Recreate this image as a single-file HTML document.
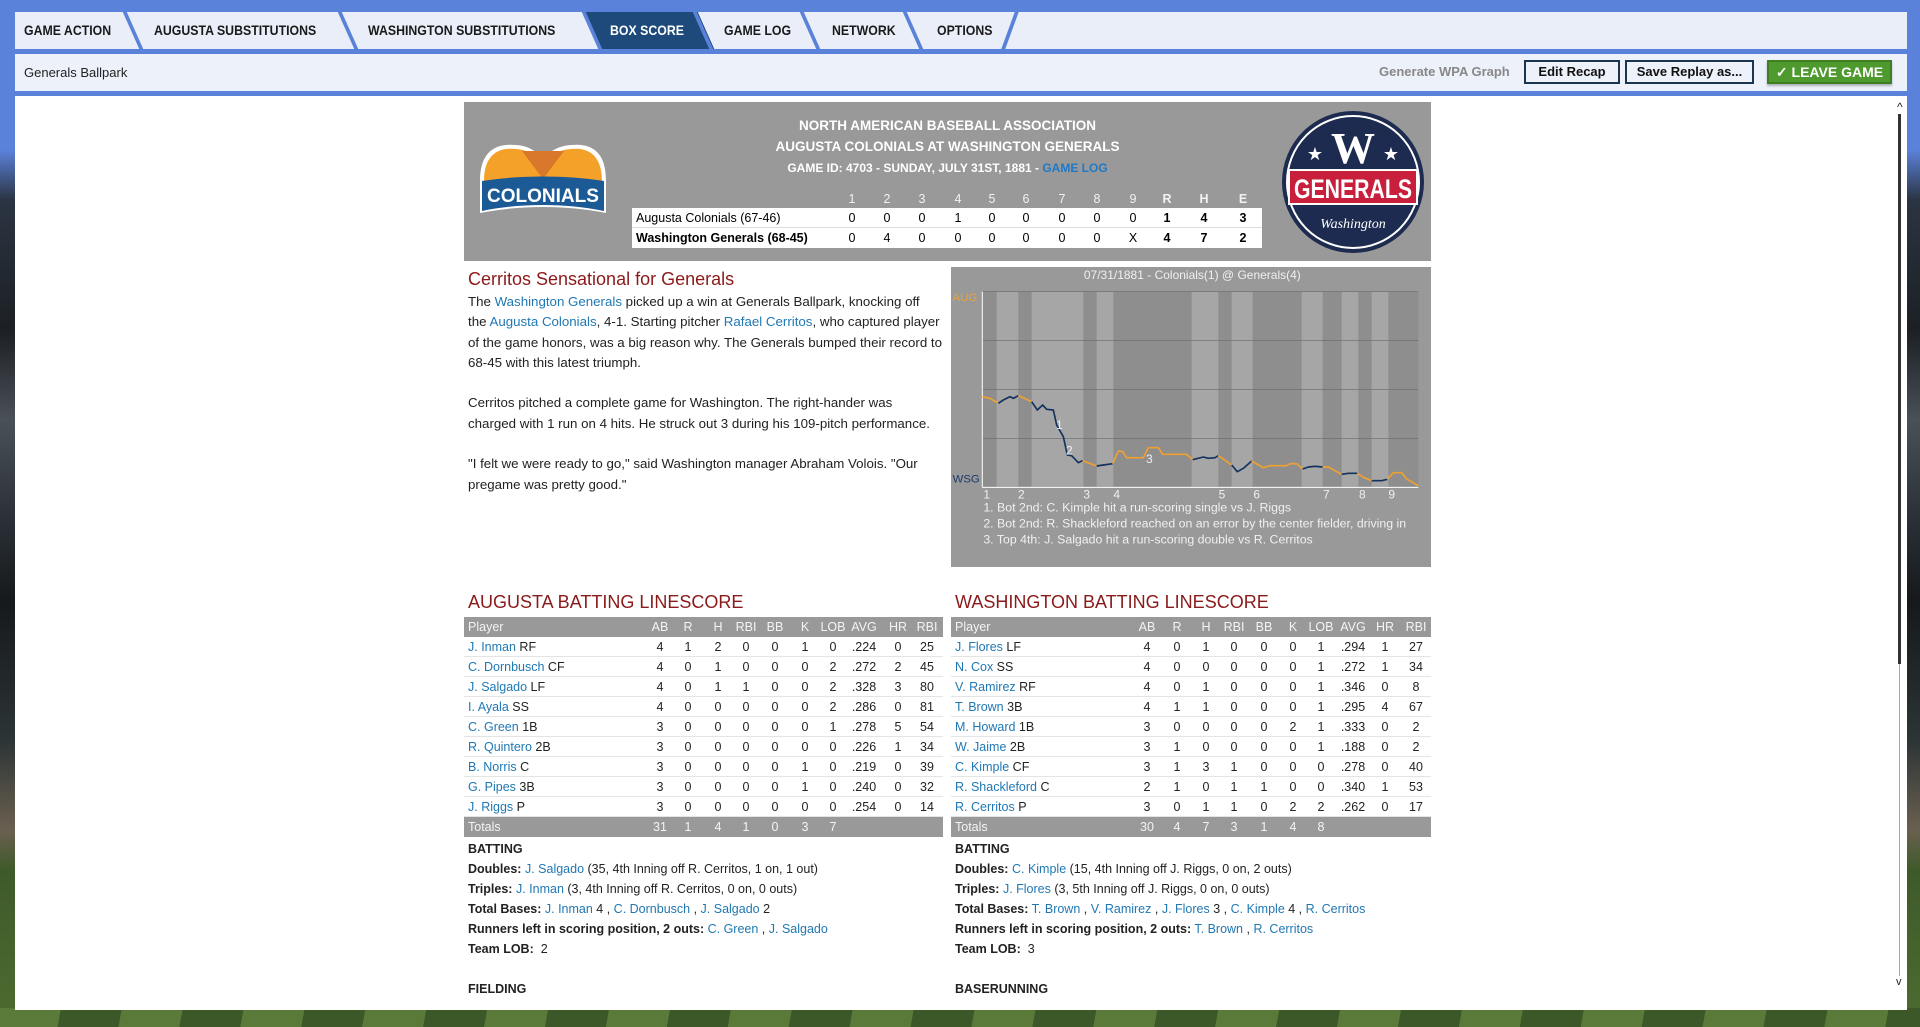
<!DOCTYPE html>
<html><head><meta charset="utf-8">
<style>
*{margin:0;padding:0;box-sizing:border-box}
body{width:1920px;height:1027px;overflow:hidden;position:relative;font-family:"Liberation Sans",sans-serif;
background:linear-gradient(180deg,#5b82da 0,#5b82da 150px,#2b3442 200px,#1c2024 330px,#4a5058 420px,#2a3036 520px,#16191b 600px,#2c3436 740px,#6a6050 830px,#3f5a2a 870px,#4d6b30 1027px)}
.grass{position:absolute;left:0;top:1008px;width:1920px;height:19px;background:repeating-linear-gradient(100deg,#5a7a3a 0 60px,#3c5828 60px 120px)}
.tabrow{position:absolute;left:15px;top:12px;width:1892px;height:37px;background:#e9eef8}
.tab{position:absolute;top:12px;height:37px;line-height:37px;font-weight:bold;font-size:14px;color:#1a1a1a;transform:scaleX(.88);transform-origin:left}
.sep{position:absolute;top:12px;width:4px;height:37px;background:#5b82da;transform:skewX(24deg)}
.active{position:absolute;left:592px;top:12px;width:114px;height:37px;background:#1d4a7a;transform:skewX(24deg)}
.bar{position:absolute;left:15px;top:54px;width:1892px;height:37px;background:#edf1fa}
.panel{position:absolute;left:15px;top:96px;width:1892px;height:914px;background:#fff}
.btn{position:absolute;top:60px;height:24px;border:2px solid #1b3550;background:#edf1fa;font-size:13px;font-weight:bold;text-align:center;line-height:20px;color:#111}
.hdr{position:absolute;left:464px;top:102px;width:967px;height:159px;background:#999}
.ht{position:absolute;left:0;width:967px;text-align:center;color:#fff;font-weight:bold;font-size:13.5px}
.ls{position:absolute;left:632px;width:630px;height:20px;font-size:12.5px;line-height:20px}
.ls span{position:absolute;top:0;width:30px;margin-left:-15px;text-align:center}
a,.l{color:#1f78b4;text-decoration:none}
.recap{position:absolute;left:468px;top:292px;font-size:13.3px;line-height:20.3px;color:#222}
h2{position:absolute;font-weight:normal;color:#8b1a1a;font-size:18px}
.tbl{position:absolute;width:479px;font-size:12.5px}
.row{position:relative;height:20px;line-height:20px;border-bottom:1px solid #e4e4e4;color:#222}
.row.h,.row.t{background:#999;color:#f4f4f4;border:none}
.row span{position:absolute;top:0;width:34px;margin-left:-17px;text-align:center}
.row .p{left:4px;margin:0;width:auto;text-align:left}
.notes{position:absolute;font-size:12.5px;line-height:20px;color:#222}
.notes b{font-weight:bold}
</style></head><body>
<div class="grass"></div>
<div class="tabrow"></div>
<div class="active"></div>
<div class="sep" style="left:131px"></div>
<div class="sep" style="left:346px"></div>
<div class="sep" style="left:590px"></div>
<div class="sep" style="left:701px"></div>
<div class="sep" style="left:808px"></div>
<div class="sep" style="left:911px"></div>
<div class="sep" style="left:1008px;transform:skewX(-20deg)"></div>
<div class="tab" style="left:24px">GAME ACTION</div>
<div class="tab" style="left:154px">AUGUSTA SUBSTITUTIONS</div>
<div class="tab" style="left:368px">WASHINGTON SUBSTITUTIONS</div>
<div class="tab" style="left:610px;color:#fff">BOX SCORE</div>
<div class="tab" style="left:724px">GAME LOG</div>
<div class="tab" style="left:832px">NETWORK</div>
<div class="tab" style="left:937px">OPTIONS</div>
<div class="bar"></div>
<div style="position:absolute;left:24px;top:65px;font-size:13px;color:#222">Generals Ballpark</div>
<div style="position:absolute;left:1379px;top:64px;font-size:13px;font-weight:bold;color:#888">Generate WPA Graph</div>
<div class="btn" style="left:1524px;width:96px">Edit Recap</div>
<div class="btn" style="left:1625px;width:129px">Save Replay as...</div>
<div class="btn" style="left:1767px;width:125px;background:#4e9a2e;border-color:#3d7f22;color:#fff;font-size:14px;box-shadow:0 2px 2px #0004">✓ LEAVE GAME</div>
<div class="panel"></div>
<div style="position:absolute;left:1897px;top:100px;font-size:12px;color:#222">^</div>
<div style="position:absolute;left:1898px;top:114px;width:3px;height:550px;background:#333"></div>
<div style="position:absolute;left:1899px;top:664px;width:1px;height:312px;background:#aaa"></div>
<div style="position:absolute;left:1896px;top:976px;font-size:11px;color:#222">v</div>

<div class="hdr">
 <div class="ht" style="top:16px">NORTH AMERICAN BASEBALL ASSOCIATION</div>
 <div class="ht" style="top:37px">AUGUSTA COLONIALS AT WASHINGTON GENERALS</div>
 <div class="ht" style="top:59px;font-size:12px">GAME ID: 4703 - SUNDAY, JULY 31ST, 1881 - <span style="color:#1f78c8">GAME LOG</span></div>
</div>
<svg style="position:absolute;left:476px;top:141px" width="134" height="80" viewBox="0 0 134 80">
 <path d="M4 40 C4 10 20 2 40 4 C55 5 60 12 67 16 C74 12 80 5 95 4 C115 2 130 10 130 40 L130 72 C90 64 44 64 4 72 Z" fill="#fff"/>
 <path d="M8 40 C8 14 22 6 40 8 C54 9 60 16 67 20 C74 16 80 9 95 8 C112 6 126 14 126 40 Z" fill="#f4a12a"/>
 <path d="M46 10 L88 10 L67 38 Z" fill="#d9772a"/>
 <path d="M6 40 C44 34 90 34 128 40 L128 70 C90 62 44 62 6 70 Z" fill="#1c5a96"/>
 <text x="67" y="61" text-anchor="middle" fill="#fff" font-weight="bold" font-size="19" font-family="Liberation Sans">COLONIALS</text>
</svg>
<svg style="position:absolute;left:1281px;top:110px" width="144" height="144" viewBox="0 0 144 144">
 <circle cx="72" cy="72" r="71" fill="#1c2b4f"/><circle cx="72" cy="72" r="66" fill="none" stroke="#fff" stroke-width="2"/>
 <rect x="8" y="60" width="128" height="34" fill="#c8203c" stroke="#fff" stroke-width="2"/>
 <text x="72" y="53" text-anchor="middle" fill="#fff" font-weight="bold" font-size="44" font-family="Liberation Serif">W</text>
 <text x="34" y="50" text-anchor="middle" fill="#fff" font-size="18">★</text><text x="110" y="50" text-anchor="middle" fill="#fff" font-size="18">★</text>
 <text x="72" y="88" text-anchor="middle" fill="#fff" font-weight="bold" font-size="27" font-family="Liberation Sans" textLength="118" lengthAdjust="spacingAndGlyphs">GENERALS</text>
 <text x="72" y="118" text-anchor="middle" fill="#fff" font-style="italic" font-size="14" font-family="Liberation Serif">Washington</text>
</svg>
<div class="ls" style="top:189px;color:#f2f2f2;background:#999"><span style="left:220px">1</span><span style="left:255px">2</span><span style="left:290px">3</span><span style="left:326px">4</span><span style="left:360px">5</span><span style="left:394px">6</span><span style="left:430px">7</span><span style="left:465px">8</span><span style="left:501px">9</span><b><span style="left:535px">R</span><span style="left:572px">H</span><span style="left:611px">E</span></b></div>
<div class="ls" style="top:208px;background:#fff;border-bottom:1px solid #ddd"><span style="left:4px;width:auto;margin:0;text-align:left">Augusta Colonials (67-46)</span><span style="left:220px">0</span><span style="left:255px">0</span><span style="left:290px">0</span><span style="left:326px">1</span><span style="left:360px">0</span><span style="left:394px">0</span><span style="left:430px">0</span><span style="left:465px">0</span><span style="left:501px">0</span><b><span style="left:535px">1</span><span style="left:572px">4</span><span style="left:611px">3</span></b></div>
<div class="ls" style="top:228px;background:#fff"><b><span style="left:4px;width:auto;margin:0;text-align:left">Washington Generals (68-45)</span></b><span style="left:220px">0</span><span style="left:255px">4</span><span style="left:290px">0</span><span style="left:326px">0</span><span style="left:360px">0</span><span style="left:394px">0</span><span style="left:430px">0</span><span style="left:465px">0</span><span style="left:501px">X</span><b><span style="left:535px">4</span><span style="left:572px">7</span><span style="left:611px">2</span></b></div>

<h2 style="left:468px;top:269px">Cerritos Sensational for Generals</h2>
<div class="recap">The <a>Washington Generals</a> picked up a win at Generals Ballpark, knocking off<br>the <a>Augusta Colonials</a>, 4-1. Starting pitcher <a>Rafael Cerritos</a>, who captured player<br>of the game honors, was a big reason why. The Generals bumped their record to<br>68-45 with this latest triumph.<br><br>Cerritos pitched a complete game for Washington. The right-hander was<br>charged with 1 run on 4 hits. He struck out 3 during his 109-pitch performance.<br><br>"I felt we were ready to go," said Washington manager Abraham Volois. "Our<br>pregame was pretty good."</div>

<svg style="position:absolute;left:951px;top:267px" width="480" height="300" viewBox="3 6 1440 900">
 <rect x="0" y="0" width="1455" height="915" fill="#999"/>
 <rect x="97" y="80" width="1308" height="585" fill="#8e8e8e"/>
 <g fill="#a6a6a6"><rect x="140" y="80" width="65" height="585"/><rect x="245" y="80" width="155" height="585"/><rect x="440" y="80" width="50" height="585"/><rect x="725" y="80" width="80" height="585"/><rect x="845" y="80" width="63" height="585"/><rect x="1055" y="80" width="63" height="585"/><rect x="1175" y="80" width="50" height="585"/><rect x="1265" y="80" width="50" height="585"/></g>
 <g stroke="#6a6a6a" stroke-width="2"><line x1="97" y1="80" x2="1405" y2="80"/><line x1="97" y1="227" x2="1405" y2="227"/><line x1="97" y1="373" x2="1405" y2="373"/><line x1="97" y1="520" x2="1405" y2="520"/></g>
 <g stroke="#fff" stroke-width="3"><line x1="97" y1="80" x2="97" y2="667"/><line x1="97" y1="667" x2="1405" y2="667"/></g>
 <text x="727" y="42" text-anchor="middle" fill="#f0f0f0" font-size="36" font-family="Liberation Sans">07/31/1881 - Colonials(1) @ Generals(4)</text>
 <text x="8" y="108" fill="#f0a030" font-size="34" font-family="Liberation Sans">AUG</text>
 <text x="8" y="652" fill="#1c3a6a" font-size="34" font-family="Liberation Sans">WSG</text>
 <g fill="none" stroke-width="5" stroke-linejoin="round">
 <polyline stroke="#f0a030" points="97,395 120,400 145,415"/>
 <polyline stroke="#13325e" points="145,415 160,405 180,395 190,400 205,392"/>
 <polyline stroke="#f0a030" points="205,392 245,410"/>
 <polyline stroke="#13325e" points="245,410 262,435 278,420 290,433 310,435 320,480 340,515 352,570 365,572 385,593 398,587"/>
 <polyline stroke="#f0a030" points="398,587 440,603"/>
 <polyline stroke="#13325e" points="440,603 460,600 488,596"/>
 <polyline stroke="#f0a030" points="488,596 505,558 518,560 530,578 580,578 595,548 625,548 638,568 710,568 728,584"/>
 <polyline stroke="#13325e" points="728,584 760,576 775,580 795,578 805,572"/>
 <polyline stroke="#f0a030" points="805,572 845,600"/>
 <polyline stroke="#13325e" points="845,600 862,620 880,610 905,588"/>
 <polyline stroke="#f0a030" points="905,588 940,608 960,602 1010,602 1020,596 1040,596 1058,612"/>
 <polyline stroke="#13325e" points="1058,612 1075,606 1095,604 1118,606"/>
 <polyline stroke="#f0a030" points="1118,606 1135,606 1175,628"/>
 <polyline stroke="#13325e" points="1175,628 1195,625 1222,625"/>
 <polyline stroke="#f0a030" points="1222,625 1240,637 1265,647"/>
 <polyline stroke="#13325e" points="1265,647 1295,647 1312,643"/>
 <polyline stroke="#f0a030" points="1312,643 1330,623 1355,623 1370,642 1405,662"/>
 </g>
 <g fill="#f0f0f0" font-size="36" font-family="Liberation Sans">
 <text x="318" y="492">1</text><text x="348" y="568">2</text><text x="588" y="594">3</text>
 <text x="100" y="700">1</text><text x="204" y="700">2</text><text x="400" y="700">3</text><text x="490" y="700">4</text><text x="806" y="700">5</text><text x="910" y="700">6</text><text x="1119" y="700">7</text><text x="1227" y="700">8</text><text x="1315" y="700">9</text>
 <text x="100" y="740" font-size="37">1. Bot 2nd: C. Kimple hit a run-scoring single vs J. Riggs</text>
 <text x="100" y="788" font-size="37">2. Bot 2nd: R. Shackleford reached on an error by the center fielder, driving in</text>
 <text x="100" y="836" font-size="37">3. Top 4th: J. Salgado hit a run-scoring double vs R. Cerritos</text>
 </g>
</svg>

<h2 style="left:468px;top:592px">AUGUSTA BATTING LINESCORE</h2>
<h2 style="left:955px;top:592px">WASHINGTON BATTING LINESCORE</h2>

<div class="tbl" style="left:464px;top:617px">
<div class="row h"><span class="p">Player</span><span style="left:196px">AB</span><span style="left:224px">R</span><span style="left:254px">H</span><span style="left:282px">RBI</span><span style="left:311px">BB</span><span style="left:341px">K</span><span style="left:369px">LOB</span><span style="left:400px">AVG</span><span style="left:434px">HR</span><span style="left:463px">RBI</span></div>
<div class="row"><span class="p"><a>J. Inman</a> RF</span><span style="left:196px">4</span><span style="left:224px">1</span><span style="left:254px">2</span><span style="left:282px">0</span><span style="left:311px">0</span><span style="left:341px">1</span><span style="left:369px">0</span><span style="left:400px">.224</span><span style="left:434px">0</span><span style="left:463px">25</span></div>
<div class="row"><span class="p"><a>C. Dornbusch</a> CF</span><span style="left:196px">4</span><span style="left:224px">0</span><span style="left:254px">1</span><span style="left:282px">0</span><span style="left:311px">0</span><span style="left:341px">0</span><span style="left:369px">2</span><span style="left:400px">.272</span><span style="left:434px">2</span><span style="left:463px">45</span></div>
<div class="row"><span class="p"><a>J. Salgado</a> LF</span><span style="left:196px">4</span><span style="left:224px">0</span><span style="left:254px">1</span><span style="left:282px">1</span><span style="left:311px">0</span><span style="left:341px">0</span><span style="left:369px">2</span><span style="left:400px">.328</span><span style="left:434px">3</span><span style="left:463px">80</span></div>
<div class="row"><span class="p"><a>I. Ayala</a> SS</span><span style="left:196px">4</span><span style="left:224px">0</span><span style="left:254px">0</span><span style="left:282px">0</span><span style="left:311px">0</span><span style="left:341px">0</span><span style="left:369px">2</span><span style="left:400px">.286</span><span style="left:434px">0</span><span style="left:463px">81</span></div>
<div class="row"><span class="p"><a>C. Green</a> 1B</span><span style="left:196px">3</span><span style="left:224px">0</span><span style="left:254px">0</span><span style="left:282px">0</span><span style="left:311px">0</span><span style="left:341px">0</span><span style="left:369px">1</span><span style="left:400px">.278</span><span style="left:434px">5</span><span style="left:463px">54</span></div>
<div class="row"><span class="p"><a>R. Quintero</a> 2B</span><span style="left:196px">3</span><span style="left:224px">0</span><span style="left:254px">0</span><span style="left:282px">0</span><span style="left:311px">0</span><span style="left:341px">0</span><span style="left:369px">0</span><span style="left:400px">.226</span><span style="left:434px">1</span><span style="left:463px">34</span></div>
<div class="row"><span class="p"><a>B. Norris</a> C</span><span style="left:196px">3</span><span style="left:224px">0</span><span style="left:254px">0</span><span style="left:282px">0</span><span style="left:311px">0</span><span style="left:341px">1</span><span style="left:369px">0</span><span style="left:400px">.219</span><span style="left:434px">0</span><span style="left:463px">39</span></div>
<div class="row"><span class="p"><a>G. Pipes</a> 3B</span><span style="left:196px">3</span><span style="left:224px">0</span><span style="left:254px">0</span><span style="left:282px">0</span><span style="left:311px">0</span><span style="left:341px">1</span><span style="left:369px">0</span><span style="left:400px">.240</span><span style="left:434px">0</span><span style="left:463px">32</span></div>
<div class="row"><span class="p"><a>J. Riggs</a> P</span><span style="left:196px">3</span><span style="left:224px">0</span><span style="left:254px">0</span><span style="left:282px">0</span><span style="left:311px">0</span><span style="left:341px">0</span><span style="left:369px">0</span><span style="left:400px">.254</span><span style="left:434px">0</span><span style="left:463px">14</span></div>
<div class="row t"><span class="p">Totals</span><span style="left:196px">31</span><span style="left:224px">1</span><span style="left:254px">4</span><span style="left:282px">1</span><span style="left:311px">0</span><span style="left:341px">3</span><span style="left:369px">7</span></div>
</div>

<div class="tbl" style="left:951px;top:617px;width:480px">
<div class="row h"><span class="p">Player</span><span style="left:196px">AB</span><span style="left:226px">R</span><span style="left:255px">H</span><span style="left:283px">RBI</span><span style="left:313px">BB</span><span style="left:342px">K</span><span style="left:370px">LOB</span><span style="left:402px">AVG</span><span style="left:434px">HR</span><span style="left:465px">RBI</span></div>
<div class="row"><span class="p"><a>J. Flores</a> LF</span><span style="left:196px">4</span><span style="left:226px">0</span><span style="left:255px">1</span><span style="left:283px">0</span><span style="left:313px">0</span><span style="left:342px">0</span><span style="left:370px">1</span><span style="left:402px">.294</span><span style="left:434px">1</span><span style="left:465px">27</span></div>
<div class="row"><span class="p"><a>N. Cox</a> SS</span><span style="left:196px">4</span><span style="left:226px">0</span><span style="left:255px">0</span><span style="left:283px">0</span><span style="left:313px">0</span><span style="left:342px">0</span><span style="left:370px">1</span><span style="left:402px">.272</span><span style="left:434px">1</span><span style="left:465px">34</span></div>
<div class="row"><span class="p"><a>V. Ramirez</a> RF</span><span style="left:196px">4</span><span style="left:226px">0</span><span style="left:255px">1</span><span style="left:283px">0</span><span style="left:313px">0</span><span style="left:342px">0</span><span style="left:370px">1</span><span style="left:402px">.346</span><span style="left:434px">0</span><span style="left:465px">8</span></div>
<div class="row"><span class="p"><a>T. Brown</a> 3B</span><span style="left:196px">4</span><span style="left:226px">1</span><span style="left:255px">1</span><span style="left:283px">0</span><span style="left:313px">0</span><span style="left:342px">0</span><span style="left:370px">1</span><span style="left:402px">.295</span><span style="left:434px">4</span><span style="left:465px">67</span></div>
<div class="row"><span class="p"><a>M. Howard</a> 1B</span><span style="left:196px">3</span><span style="left:226px">0</span><span style="left:255px">0</span><span style="left:283px">0</span><span style="left:313px">0</span><span style="left:342px">2</span><span style="left:370px">1</span><span style="left:402px">.333</span><span style="left:434px">0</span><span style="left:465px">2</span></div>
<div class="row"><span class="p"><a>W. Jaime</a> 2B</span><span style="left:196px">3</span><span style="left:226px">1</span><span style="left:255px">0</span><span style="left:283px">0</span><span style="left:313px">0</span><span style="left:342px">0</span><span style="left:370px">1</span><span style="left:402px">.188</span><span style="left:434px">0</span><span style="left:465px">2</span></div>
<div class="row"><span class="p"><a>C. Kimple</a> CF</span><span style="left:196px">3</span><span style="left:226px">1</span><span style="left:255px">3</span><span style="left:283px">1</span><span style="left:313px">0</span><span style="left:342px">0</span><span style="left:370px">0</span><span style="left:402px">.278</span><span style="left:434px">0</span><span style="left:465px">40</span></div>
<div class="row"><span class="p"><a>R. Shackleford</a> C</span><span style="left:196px">2</span><span style="left:226px">1</span><span style="left:255px">0</span><span style="left:283px">1</span><span style="left:313px">1</span><span style="left:342px">0</span><span style="left:370px">0</span><span style="left:402px">.340</span><span style="left:434px">1</span><span style="left:465px">53</span></div>
<div class="row"><span class="p"><a>R. Cerritos</a> P</span><span style="left:196px">3</span><span style="left:226px">0</span><span style="left:255px">1</span><span style="left:283px">1</span><span style="left:313px">0</span><span style="left:342px">2</span><span style="left:370px">2</span><span style="left:402px">.262</span><span style="left:434px">0</span><span style="left:465px">17</span></div>
<div class="row t"><span class="p">Totals</span><span style="left:196px">30</span><span style="left:226px">4</span><span style="left:255px">7</span><span style="left:283px">3</span><span style="left:313px">1</span><span style="left:342px">4</span><span style="left:370px">8</span></div>
</div>

<div class="notes" style="left:468px;top:839px"><b>BATTING</b><br><b>Doubles:</b> <a>J. Salgado</a> (35, 4th Inning off R. Cerritos, 1 on, 1 out)<br><b>Triples:</b> <a>J. Inman</a> (3, 4th Inning off R. Cerritos, 0 on, 0 outs)<br><b>Total Bases:</b> <a>J. Inman</a> 4 , <a>C. Dornbusch</a> , <a>J. Salgado</a> 2<br><b>Runners left in scoring position, 2 outs:</b> <a>C. Green</a> , <a>J. Salgado</a><br><b>Team LOB:</b>&nbsp; 2<br><br><b>FIELDING</b></div>
<div class="notes" style="left:955px;top:839px"><b>BATTING</b><br><b>Doubles:</b> <a>C. Kimple</a> (15, 4th Inning off J. Riggs, 0 on, 2 outs)<br><b>Triples:</b> <a>J. Flores</a> (3, 5th Inning off J. Riggs, 0 on, 0 outs)<br><b>Total Bases:</b> <a>T. Brown</a> , <a>V. Ramirez</a> , <a>J. Flores</a> 3 , <a>C. Kimple</a> 4 , <a>R. Cerritos</a><br><b>Runners left in scoring position, 2 outs:</b> <a>T. Brown</a> , <a>R. Cerritos</a><br><b>Team LOB:</b>&nbsp; 3<br><br><b>BASERUNNING</b></div>
</body></html>
